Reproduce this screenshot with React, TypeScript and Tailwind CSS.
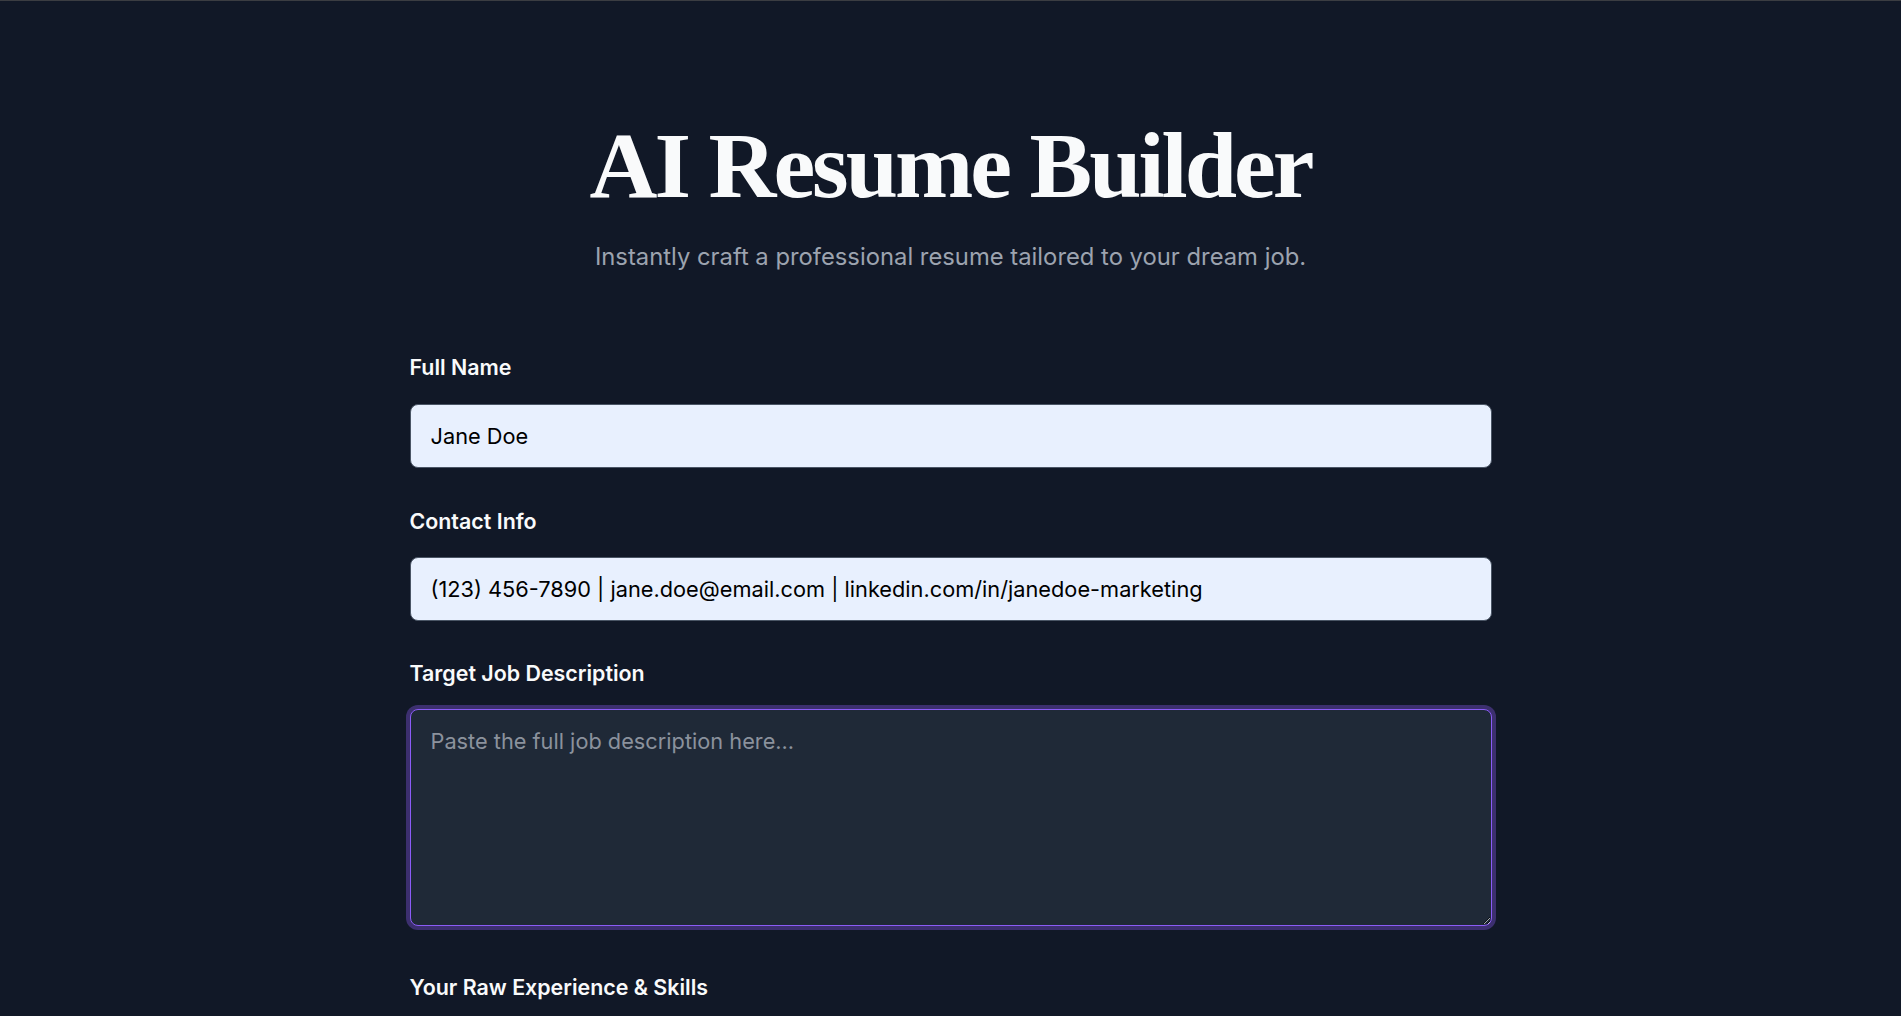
import React from "react";

export default function App() {
  return (
    <div
      className="min-h-screen bg-[#111827] border-t border-[#3b3d42]"
      style={{ fontFamily: "Inter, 'Noto Sans', sans-serif" }}
    >
      <div className="pt-[117px] pb-24 flex flex-col items-center">
        <h1
          className="text-[94px] leading-none font-bold tracking-[-3px] text-[#f9fafb]"
          style={{ fontFamily: "'Liberation Serif', 'Times New Roman', serif" }}
        >
          AI Resume Builder
        </h1>
        <p className="mt-[31px] text-[23.8px] leading-7 text-[#9ca3af]">
          Instantly craft a professional resume tailored to your dream job.
        </p>

        <form className="mt-[82px] w-[1082px] flex flex-col">
          <label className="block text-[21.4px] leading-7 font-semibold text-gray-50">
            Full Name
          </label>
          <input
            type="text"
            defaultValue="Jane Doe"
            className="mt-[23px] h-16 w-full rounded-lg border border-gray-600 bg-[#e8f0fe] px-5 py-[17px] text-[21.75px] leading-7 text-black outline-none"
          />

          <label className="mt-[39px] block text-[21.4px] leading-7 font-semibold text-gray-50">
            Contact Info
          </label>
          <input
            type="text"
            defaultValue="(123) 456-7890 | jane.doe@email.com | linkedin.com/in/janedoe-marketing"
            className="mt-[22px] h-16 w-full rounded-lg border border-gray-600 bg-[#e8f0fe] px-5 py-[17px] text-[21.75px] leading-7 text-black outline-none"
          />

          <label className="mt-[38px] block text-[21.4px] leading-7 font-semibold text-gray-50">
            Target Job Description
          </label>
          <textarea
            placeholder="Paste the full job description here..."
            className="mt-[22px] block h-[217px] w-full rounded-lg border border-[#8b5cf6] bg-[#1f2937] px-5 py-[17px] text-[21.75px] leading-7 text-gray-100 placeholder-[#8b929d] outline-none ring-4 ring-[#8b5cf6]/35"
          />

          <label className="mt-[47px] block text-[21.4px] leading-7 font-semibold text-gray-50">
            Your Raw Experience &amp; Skills
          </label>
          <textarea
            placeholder="List your work history, achievements, and skills..."
            className="mt-[22px] block h-[217px] w-full rounded-lg border border-gray-600 bg-[#1f2937] px-5 py-[17px] text-[21.75px] leading-7 text-gray-100 placeholder-[#8b929d] outline-none"
          />

          <button
            type="button"
            className="mt-10 w-full rounded-lg bg-[#7c3aed] py-4 text-[21.75px] font-semibold text-white"
          >
            Generate Resume
          </button>
        </form>
      </div>
    </div>
  );
}
